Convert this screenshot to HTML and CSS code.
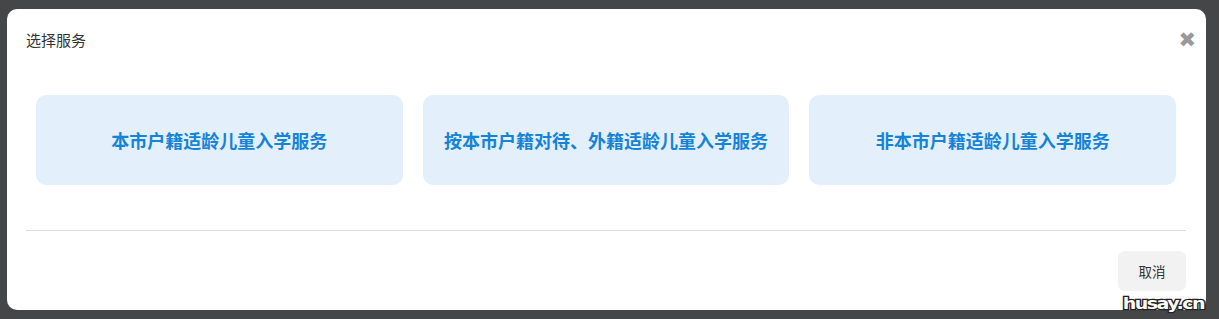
FILE: index.html
```html
<!DOCTYPE html>
<html lang="zh-CN">
<head>
<meta charset="UTF-8">
<title>选择服务</title>
<link rel="stylesheet" href="styles.css">
</head>
<body>

<div class="modal">
 <div class="modal-head">
  <span class="modal-title">选择服务</span>
  <span class="close">&#10006;</span>
 </div>

 <div class="cards">
  <div class="card">本市户籍适龄儿童入学服务</div>
  <div class="card">按本市户籍对待、外籍适龄儿童入学服务</div>
  <div class="card">非本市户籍适龄儿童入学服务</div>
 </div>

 <div class="line"></div>

 <div class="modal-foot">
  <button class="btn-cancel">取消</button>
 </div>
</div>

<div class="mark">husay.cn</div>

</body>
</html>
```

FILE: styles.css
```css
body{
 margin:0;
 height:319px;
 background:#444648;
 font-family:"Noto Sans CJK SC","Noto Sans",sans-serif;
 overflow:hidden;
 position:relative;
}

/* JANELA */
.modal{
 margin:9px 13px 0 7px;
 height:301px;
 background:#fff;
 border-radius:10px;
 box-sizing:border-box;
 display:flex;
 flex-direction:column;
}

.modal-head{
 display:flex;
 justify-content:space-between;
 padding:20px 10px 0 19px;
 height:66px;
 box-sizing:border-box;
}
.modal-title{
 font-size:15px;
 line-height:22px;
 color:#333;
}
.close{
 color:#999;
 font-size:21px;
 line-height:22px;
 font-weight:bold;
 font-family:"DejaVu Sans",sans-serif;
 cursor:pointer;
}

/* CARTOES */
.cards{
 display:grid;
 grid-template-columns:repeat(3,1fr);
 gap:20px;
 margin-top:20px;
 padding:0 30px 0 29px;
}
.card{
 height:90px;
 background:#e3f0fb;
 border-radius:10px;
 display:flex;
 align-items:center;
 justify-content:center;
 color:#1583d8;
 font-size:18px;
 font-weight:bold;
}

.line{
 height:1px;
 background:#dcdcdc;
 margin:45px 20px 0 19px;
}

.modal-foot{
 display:flex;
 justify-content:flex-end;
 padding:20px 20px 0 0;
}
.btn-cancel{
 width:68px;
 height:40px;
 border:none;
 border-radius:7px;
 background:#f2f2f2;
 color:#333;
 font-family:inherit;
 font-size:13.5px;
 cursor:pointer;
}

/* MARCA D'AGUA */
.mark{
 position:absolute;
 right:15px;
 bottom:5px;
 font-family:"DejaVu Sans",sans-serif;
 font-weight:bold;
 font-size:19px;
 letter-spacing:-1.5px;
 color:#fff;
 -webkit-text-stroke:3px #222;
 paint-order:stroke fill;
 transform:scaleY(0.85);
}
```
